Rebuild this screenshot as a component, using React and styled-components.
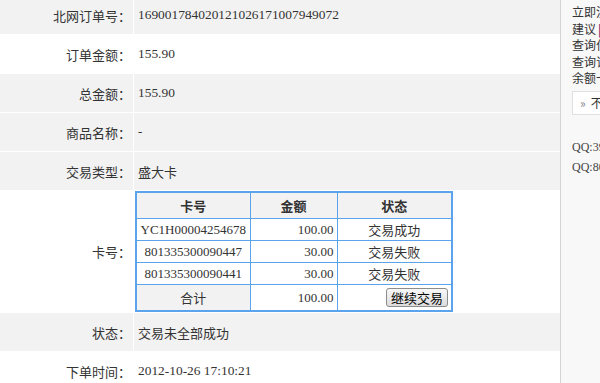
import React from "react";
import styled, { createGlobalStyle } from "styled-components";

const GlobalStyle = createGlobalStyle`
  html, body { margin: 0; padding: 0; overflow: hidden; background: #fff; }
  body { font-family: "Liberation Serif", "Noto Sans CJK SC", serif; color: #333; }
`;

const Page = styled.div`
  display: flex;
  height: 383px;
  width: 600px;
  overflow: hidden;
`;

const Main = styled.div`
  flex: none;
  width: 560px;
  overflow: hidden;
`;

const InfoGrid = styled.div`
  display: grid;
  grid-template-columns: 133px 1fr;
  gap: 1px;
  margin-top: -4px;
  background: #fff;
`;

const Cell = styled.div`
  background: ${(p) => (p.$shade ? "#f2f2f2" : "#fff")};
  min-height: 38px;
  display: flex;
  align-items: center;
  font-size: 13px;
  color: #333;
  white-space: nowrap;
`;

const Label = styled(Cell)`
  justify-content: flex-end;
  padding-right: 2px;
  font-family: "Noto Sans CJK SC", sans-serif;
`;

const Value = styled(Cell)`
  justify-content: flex-start;
  padding-left: ${(p) => (p.$flush ? "1px" : "4px")};
  font-family: "Liberation Serif", "Noto Sans CJK SC", serif;
  font-size: ${(p) => (p.$num ? "13.4px" : "13px")};
`;

const CardTable = styled.table`
  border-collapse: collapse;
  border: 2px solid #5ba3ec;
  font-size: 13px;
  color: #333;
  table-layout: fixed;
`;

const Th = styled.th`
  height: 25px;
  padding: 0;
  border: 1px solid #5ba3ec;
  background: #f2f2f2;
  font-family: "Noto Sans CJK SC", sans-serif;
  font-weight: bold;
  font-size: 13px;
  text-align: center;
  color: #333;
`;

const Td = styled.td`
  height: ${(p) => (p.$tall ? "25px" : "21px")};
  padding: 0 ${(p) => (p.$align === "right" ? "3px" : "2px")} 0 2px;
  border: 1px solid #5ba3ec;
  background: ${(p) => (p.$shade ? "#f2f2f2" : "#fff")};
  text-align: ${(p) => p.$align || "center"};
  font-family: "Liberation Serif", "Noto Sans CJK SC", serif;
  font-size: 13px;
  color: #333;
  white-space: nowrap;
`;

const Button = styled.button`
  width: 62px;
  height: 19px;
  padding: 0;
  border: 1px solid #8c8c8c;
  border-radius: 3px;
  background: linear-gradient(#f8f8f8, #dcdcdc);
  font-family: "Noto Sans CJK SC", sans-serif;
  font-size: 13px;
  line-height: 16px;
  color: #000;
  vertical-align: middle;
`;

const Sidebar = styled.div`
  flex: 1;
  min-width: 0;
  overflow: hidden;
  border-left: 1px solid #d4d4d4;
  background: #f8f8f8;
  padding: 4px 0 0 11px;
  white-space: nowrap;
`;

const SideLine = styled.div`
  font-family: "Noto Sans CJK SC", sans-serif;
  font-size: 12px;
  line-height: 16.5px;
  color: #333;
`;

const Sep = styled.span`
  color: #7b2d7b;
  font-weight: bold;
  margin: 0 2px;
`;

const SideBox = styled.div`
  margin-top: 4px;
  height: 22px;
  width: 150px;
  border: 1px solid #e0e0e0;
  background: #fff;
  display: flex;
  align-items: center;
  padding-left: 7px;
  font-family: "Noto Sans CJK SC", sans-serif;
  font-size: 12px;
  color: #333;
`;

const Arrow = styled.span`
  color: #888;
  margin-right: 5px;
`;

const QQList = styled.div`
  margin-top: 22px;
  display: flex;
  flex-direction: column;
  gap: 0;
`;

const QQ = styled.div`
  font-family: "Liberation Serif", serif;
  font-size: 12px;
  line-height: 20px;
  color: #444;
`;

const rows = [
  { label: "北网订单号：", value: "169001784020121026171007949072", shade: true, num: true },
  { label: "订单金额：", value: "155.90", shade: false, num: true },
  { label: "总金额：", value: "155.90", shade: true, num: true },
  { label: "商品名称：", value: "-", shade: true },
  { label: "交易类型：", value: "盛大卡", shade: true },
];

const cards = [
  { no: "YC1H00004254678", amount: "100.00", status: "交易成功" },
  { no: "801335300090447", amount: "30.00", status: "交易失败" },
  { no: "801335300090441", amount: "30.00", status: "交易失败" },
];

export default function App() {
  return (
    <>
      <GlobalStyle />
      <Page>
        <Main>
          <InfoGrid>
            {rows.map((r) => (
              <React.Fragment key={r.label}>
                <Label $shade={r.shade}>{r.label}</Label>
                <Value $shade={r.shade} $num={r.num}>{r.value}</Value>
              </React.Fragment>
            ))}
            <Label>卡号：</Label>
            <Value $flush>
              <CardTable>
                <colgroup>
                  <col style={{ width: "114px" }} />
                  <col style={{ width: "87px" }} />
                  <col style={{ width: "115px" }} />
                </colgroup>
                <thead>
                  <tr>
                    <Th>卡号</Th>
                    <Th>金额</Th>
                    <Th>状态</Th>
                  </tr>
                </thead>
                <tbody>
                  {cards.map((c) => (
                    <tr key={c.no}>
                      <Td>{c.no}</Td>
                      <Td $align="right">{c.amount}</Td>
                      <Td>{c.status}</Td>
                    </tr>
                  ))}
                  <tr>
                    <Td $shade $tall>合计</Td>
                    <Td $align="right" $tall>100.00</Td>
                    <Td $align="right" $tall>
                      <Button type="button">继续交易</Button>
                    </Td>
                  </tr>
                </tbody>
              </CardTable>
            </Value>
            <Label $shade>状态：</Label>
            <Value $shade>交易未全部成功</Value>
            <Label>下单时间：</Label>
            <Value $num>2012-10-26 17:10:21</Value>
          </InfoGrid>
        </Main>
        <Sidebar>
          <SideLine>立即注册</SideLine>
          <SideLine>
            建议<Sep>|</Sep>投诉
          </SideLine>
          <SideLine>查询付款</SideLine>
          <SideLine>查询订单</SideLine>
          <SideLine>余额卡查询</SideLine>
          <SideBox>
            <Arrow>»</Arrow>不能支付？
          </SideBox>
          <QQList>
            <QQ>QQ:395872461</QQ>
            <QQ>QQ:800012345</QQ>
          </QQList>
        </Sidebar>
      </Page>
    </>
  );
}
